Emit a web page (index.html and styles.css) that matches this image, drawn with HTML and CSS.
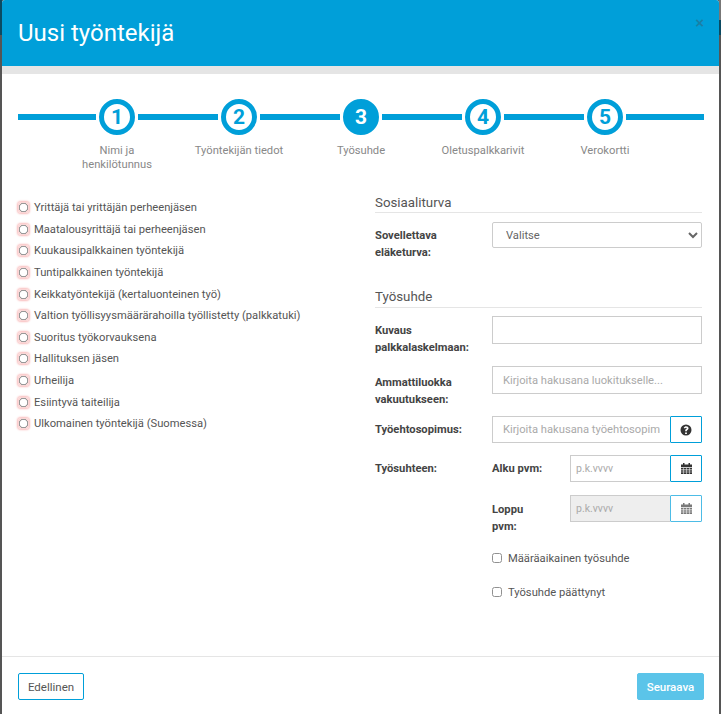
FILE: index.html
```html
<!DOCTYPE html>
<html lang="fi">
<head>
<meta charset="utf-8">
<title>Uusi työntekijä</title>
<link rel="stylesheet" href="styles.css">
</head>
<body>
<div class="modal">
  <header class="modal-header">
    <h1>Uusi työntekijä</h1>
    <button class="close" type="button">×</button>
  </header>
  <div class="band"></div>
  <main class="modal-body">
    <div class="stepper">
      <span class="line"></span><span class="circle">1</span>
      <span class="line"></span><span class="circle">2</span>
      <span class="line"></span><span class="circle active">3</span>
      <span class="line"></span><span class="circle">4</span>
      <span class="line"></span><span class="circle">5</span>
      <span class="line"></span>
    </div>
    <div class="step-labels">
      <span>Nimi ja henkilötunnus</span>
      <span>Työntekijän tiedot</span>
      <span>Työsuhde</span>
      <span>Oletuspalkkarivit</span>
      <span>Verokortti</span>
    </div>
    <div class="columns">
      <div class="radios">
        <label class="radio"><input type="radio" name="t">Yrittäjä tai yrittäjän perheenjäsen</label>
        <label class="radio"><input type="radio" name="t">Maatalousyrittäjä tai perheenjäsen</label>
        <label class="radio"><input type="radio" name="t">Kuukausipalkkainen työntekijä</label>
        <label class="radio"><input type="radio" name="t">Tuntipalkkainen työntekijä</label>
        <label class="radio"><input type="radio" name="t">Keikkatyöntekijä (kertaluonteinen työ)</label>
        <label class="radio"><input type="radio" name="t">Valtion työllisyysmäärärahoilla työllistetty (palkkatuki)</label>
        <label class="radio"><input type="radio" name="t">Suoritus työkorvauksena</label>
        <label class="radio"><input type="radio" name="t">Hallituksen jäsen</label>
        <label class="radio"><input type="radio" name="t">Urheilija</label>
        <label class="radio"><input type="radio" name="t">Esiintyvä taiteilija</label>
        <label class="radio"><input type="radio" name="t">Ulkomainen työntekijä (Suomessa)</label>
      </div>
      <div class="form">
        <h2 class="first">Sosiaaliturva</h2>
        <div class="row r-pension">
          <label>Sovellettava eläketurva:</label>
          <select class="control"><option>Valitse</option></select>
        </div>
        <h2 class="second">Työsuhde</h2>
        <div class="row r-desc">
          <label>Kuvaus palkkalaskelmaan:</label>
          <input class="control" type="text">
        </div>
        <div class="row r-job">
          <label>Ammattiluokka vakuutukseen:</label>
          <input class="control" type="text" placeholder="Kirjoita hakusana luokitukselle...">
        </div>
        <div class="row r-tes">
          <label>Työehtosopimus:</label>
          <div class="group">
            <input class="control" type="text" placeholder="Kirjoita hakusana työehtosopimukselle...">
            <button class="addon" type="button">
              <svg viewBox="0 0 24 24" width="12" height="12"><path fill="#333" fill-rule="evenodd" d="M12 1a11 11 0 1 0 0 22 11 11 0 0 0 0-22zm-1.8 16h3.6v3h-3.600zm1.900-12.500c2.900 0 5 1.700 5 4.100 0 1.800-1 2.700-2.200 3.500-.9.600-1.100.9-1.100 2.400h-3.500c0-2.500.6-3.500 2-4.400.9-.6 1.300-.9 1.300-1.400 0-.6-.6-1-1.500-1-1 0-1.700.6-2.400 1.500L7.400 7.500c1.100-1.800 2.700-3 4.700-3z"/></svg>
            </button>
          </div>
        </div>
        <div class="row r-date1">
          <label>Työsuhteen:</label>
          <div class="date">
            <label class="sub">Alku pvm:</label>
            <div class="group">
              <input class="control small" type="text" placeholder="p.k.vvvv">
              <button class="addon" type="button">
                <svg viewBox="0 0 22 24" width="11" height="12"><path fill="#333" d="M4 0h3v3h8V0h3v3h4v5.500H0V3h4zM0 10h5v3.200H0zm6 0h4.500v3.200H6zm5.500 0H16v3.200h-4.500zm5.500 0h5v3.200h-5zM0 14.300h5v3.200H0zm6 0h4.500v3.200H6zm5.500 0H16v3.200h-4.500zm5.500 0h5v3.200h-5zM0 18.600h5V22H0zm6 0h4.500V22H6zm5.500 0H16V22h-4.500zm5.500 0h5V22h-5z"/></svg>
              </button>
            </div>
          </div>
        </div>
        <div class="row r-date2">
          <span class="spacer"></span>
          <div class="date">
            <label class="sub">Loppu pvm:</label>
            <div class="group dim">
              <input class="control small" type="text" placeholder="p.k.vvvv" disabled>
              <button class="addon" type="button">
                <svg viewBox="0 0 22 24" width="11" height="12"><path fill="#333" d="M4 0h3v3h8V0h3v3h4v5.500H0V3h4zM0 10h5v3.200H0zm6 0h4.500v3.200H6zm5.500 0H16v3.200h-4.500zm5.500 0h5v3.200h-5zM0 14.300h5v3.200H0zm6 0h4.500v3.200H6zm5.500 0H16v3.200h-4.500zm5.500 0h5v3.200h-5zM0 18.600h5V22H0zm6 0h4.500V22H6zm5.500 0H16V22h-4.500zm5.500 0h5V22h-5z"/></svg>
              </button>
            </div>
          </div>
        </div>
        <label class="check c1"><input type="checkbox">Määräaikainen työsuhde</label>
        <label class="check c2"><input type="checkbox">Työsuhde päättynyt</label>
      </div>
    </div>
  </main>
  <footer class="modal-footer">
    <button class="btn" type="button">Edellinen</button>
    <button class="btn primary" type="button">Seuraava</button>
  </footer>
</div>
</body>
</html>
```

FILE: styles.css
```css
* { box-sizing: border-box; }
html, body { height: 100%; }
body {
  margin: 0;
  background:
    linear-gradient(to bottom, #777 0, #777 20px, #0b4a62 20px, #0b4a62 35px, #555 35px) right top / 2px 100% no-repeat,
    linear-gradient(to bottom, #0b4a62 0, #0b4a62 35px, #555 35px) left top / 2px 100% no-repeat,
    #555;
  overflow: hidden;
  font-family: Roboto, "Liberation Sans", sans-serif;
  color: #555;
}
.modal {
  margin-left: 2px;
  width: 717px;
  height: 714px;
  background: #fff;
  border-radius: 3px 3px 0 0;
  overflow: hidden;
  display: flex;
  flex-direction: column;
}
.modal-header {
  height: 66px;
  flex: none;
  background: #009fd9;
  padding: 0 16px;
  display: flex;
  align-items: center;
  justify-content: space-between;
}
.modal-header h1 {
  margin: 0;
  color: #fff;
  font-size: 24px;
  font-weight: 400;
  line-height: 66px;
}
.close {
  border: 0;
  background: none;
  padding: 0;
  margin: -21px -1px 0 0;
  font-size: 15px;
  line-height: 1;
  font-weight: 700;
  color: #1b7fa6;
  font-family: "Liberation Sans", sans-serif;
}
.band { height: 8px; flex: none; background: #e5e5e5; }
.modal-body { flex: 1; padding: 25px 15px 0 16px; }
.stepper { display: flex; align-items: center; height: 36px; }
.line { width: 80px; height: 6px; background: #009fd9; flex: none; }
.line:first-child, .line:last-child { width: 78px; }
.circle {
  width: 36px;
  height: 36px;
  flex: none;
  margin: 0 3px;
  border: 5px solid #009fd9;
  border-radius: 50%;
  background: #fff;
  color: #009fd9;
  font-size: 21px;
  font-weight: 700;
  display: flex;
  align-items: center;
  justify-content: center;
}
.circle.active { background: #009fd9; color: #fff; }
.step-labels {
  display: grid;
  grid-template-columns: repeat(5, 122px);
  margin: 9px 0 0 38px;
  font-size: 11.2px;
  line-height: 14px;
  color: #888;
  text-align: center;
  height: 42px;
}
.step-labels span { padding: 0 18px; }
.step-labels span:nth-child(2), .step-labels span:nth-child(4) { padding: 0; }
.columns { display: flex; }
.radios { width: 357px; flex: none; padding-top: 11px; }
.radio {
  display: flex;
  align-items: center;
  height: 21.6px;
  font-size: 11.2px;
  color: #555;
}
.radio input {
  appearance: none;
  width: 11px;
  height: 11px;
  margin: 0 5px 0 0;
  border: 0;
  border-radius: 3px;
  background: radial-gradient(circle at 50% 50%, #fff 0, #fff 3.5px, #999 3.9px, #999 4.5px, #fad6d6 5px);
  box-shadow: 0 0 2px 1px #f9bcbc;
}
.form { width: 327px; flex: none; padding-top: 7px; }
h2 {
  margin: 0;
  font-size: 13.3px;
  font-weight: 400;
  color: #555;
  line-height: 17px;
  padding-bottom: 1px;
  border-bottom: 1px solid #e5e5e5;
}
h2.first { padding-top: 1px; }
h2.second { margin-top: 26px; height: 20px; }
.row { display: flex; align-items: flex-start; font-size: 11.2px; }
.row > label, .spacer {
  width: 117px;
  flex: none;
  font-weight: 700;
  color: #444;
  line-height: 16.500px;
  padding-right: 30px;
}
.control {
  width: 210px;
  height: 27px;
  flex: none;
  border: 1px solid #ccc;
  background: #fff;
  font: 11.2px Roboto, "Liberation Sans", sans-serif;
  color: #666;
  padding: 0 10px;
  border-radius: 0;
  outline: none;
}
.control::placeholder { color: #aaa; opacity: 1; }
select.control { padding-left: 9px; border-radius: 2px; height: 26px; }
.r-pension { margin-top: 9px; height: 40px; }
.r-pension > label { padding-top: 6px; }
.r-desc { margin-top: 8px; height: 50px; }
.r-desc > label { padding-top: 7px; }
.r-desc .control { height: 28px; }
.r-job { height: 50px; }
.r-job > label { padding-top: 9px; }
.r-job .control { height: 28px; }
.r-tes { height: 39px; }
.r-tes > label { line-height: 27px; padding-right: 0; }
.r-date1 { height: 40px; }
.r-date1 > label { line-height: 27px; }
.r-date2 { height: 55px; }
.group { display: flex; width: 210px; }
.group .control { width: 178px; border-right: 0; }
.addon {
  width: 32px;
  height: 27px;
  flex: none;
  border: 1px solid #009fd9;
  background: #fff;
  padding: 0;
  border-radius: 1px;
  display: flex;
  align-items: center;
  justify-content: center;
}
.date { display: flex; width: 210px; }
.sub {
  width: 78px;
  flex: none;
  font-weight: 700;
  color: #444;
  line-height: 16.500px;
  padding: 0 30px 0 0;
}
.r-date1 .sub { line-height: 27px; padding-right: 0; }
.r-date2 .sub { padding-top: 7px; }
.date .group { width: 132px; }
.date .control { width: 100px; padding: 0 5px; font-size: 10.500px; }
.group.dim .control { background: #eee; }
.group.dim .addon { border-color: #4dbce6; }
.group.dim svg { opacity: .65; }
.check {
  display: flex;
  align-items: center;
  height: 16px;
  margin-left: 117px;
  font-size: 11.2px;
  color: #555;
}
.check input { width: 10px; height: 10px; margin: 0 6px 0 0; opacity: .8; }
.c2 { margin-top: 18px; }
.modal-footer {
  height: 58px;
  flex: none;
  border-top: 1px solid #e5e5e5;
  padding: 16px 15px 0 16px;
  display: flex;
  justify-content: space-between;
  align-items: flex-start;
}
.btn {
  height: 27px;
  width: 66px;
  border: 1px solid #009fd9;
  background: #fff;
  border-radius: 2px;
  font: 11.5px Roboto, "Liberation Sans", sans-serif;
  color: #555;
  padding: 0;
}
.btn.primary {
  width: 67px;
  background: #5bc4e9;
  border-color: #5bc4e9;
  color: #fff;
  font-weight: 500;
}
```
